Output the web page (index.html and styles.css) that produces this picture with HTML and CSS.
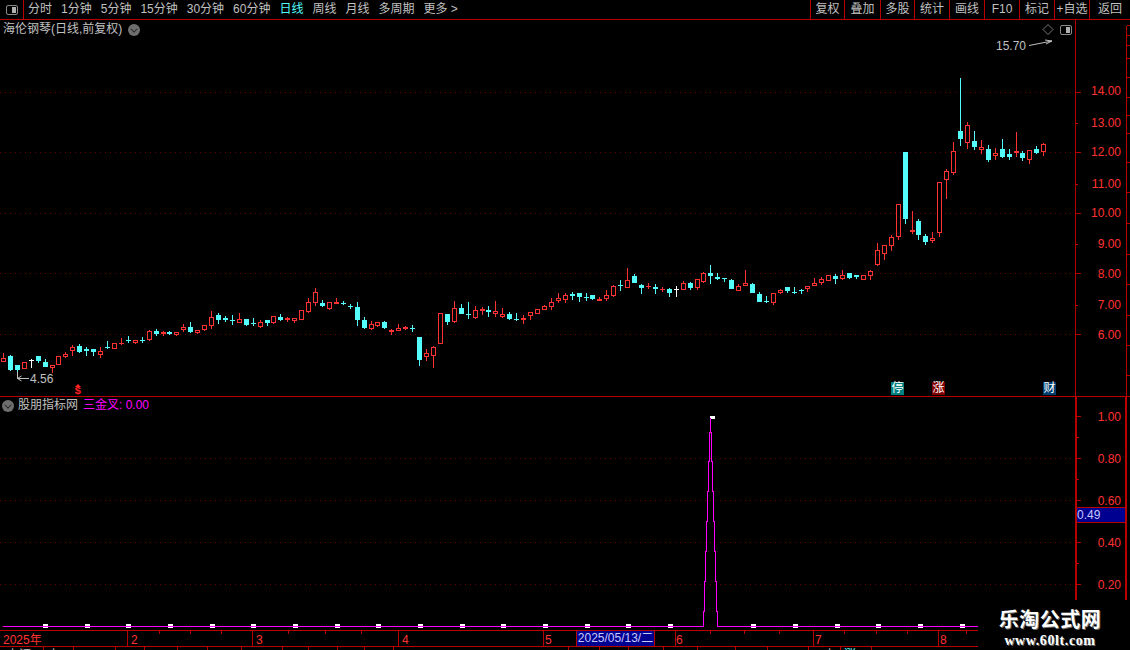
FILE: index.html
```html
<!DOCTYPE html>
<html lang="zh-CN">
<head>
<meta charset="utf-8">
<title>海伦钢琴 日线</title>
<link rel="stylesheet" href="styles.css">
</head>
<body>
<div class="app">
  <header class="toolbar">
    <button class="panel-btn" aria-label="切换面板">
      <svg class="toggle-icon" viewBox="0 0 12 10" width="12" height="10"><rect x=".5" y=".5" width="11" height="9" rx="1.5" class="toggle-frame"/><rect x="6" y="2" width="4" height="6" class="toggle-fill"/></svg>
    </button>
    <nav class="periods">
      <span>分时</span><span>1分钟</span><span>5分钟</span><span>15分钟</span><span>30分钟</span><span>60分钟</span>
      <span class="is-active">日线</span><span>周线</span><span>月线</span><span>多周期</span><span class="more">更多 &gt;</span>
    </nav>
    <div class="actions">
      <span>复权</span><span>叠加</span><span>多股</span><span>统计</span><span>画线</span><span>F10</span><span>标记</span><span>+自选</span><span>返回</span>
    </div>
  </header>

  <section class="pane pane-upper">
    <div class="plot">
      <svg id="price" class="canvas" viewBox="0 20 1075 376" width="1075" height="376">
        <g class="grid">
          <line x1="0" x2="1075" y1="92.5" y2="92.5"/><line x1="0" x2="1075" y1="152.5" y2="152.5"/><line x1="0" x2="1075" y1="213.5" y2="213.5"/><line x1="0" x2="1075" y1="273.5" y2="273.5"/><line x1="0" x2="1075" y1="334.5" y2="334.5"/>
        </g>
        <g id="candles"></g>
        <path class="note-line" d="M17.5 372V378.5H29M17.5 378.5l4-2.5M17.5 378.5l4 2.5"/>
        <text class="note" x="30" y="383">4.56</text>
        <text class="note" x="996" y="50">15.70</text>
        <path class="note-line" d="M1029 45.5L1052 41M1052 41l-7-1M1052 41l-6 3"/>
        <path class="diamond" d="M1048 24.5l5 5-5 5-5-5z"/>
        <text class="dollar" x="74.500" y="393.500">$</text>
        <path class="dollar-cap" d="M78 384l-3 3h6z"/>
      </svg>
      <div class="title"><span>海伦钢琴(日线,前复权)</span><i class="chevron"></i></div>
      <svg class="toggle-icon toggle-float" viewBox="0 0 12 10" width="12" height="10"><rect x=".5" y=".5" width="11" height="9" rx="1.5" class="toggle-frame"/><rect x="6" y="2" width="4" height="6" class="toggle-fill"/></svg>
      <span class="tag tag-teal tag-a">停</span>
      <span class="tag tag-red tag-b">涨</span>
      <span class="tag tag-blue tag-c">财</span>
    </div>
    <div class="axis">
      <svg class="canvas" viewBox="1076 20 54 376" width="54" height="376">
        <line class="axis-edge" x1="1126.5" x2="1126.5" y1="26" y2="396"/>
        <g class="ticks">
          <path d="M1076 92.5h5M1076 152.5h5M1076 213.5h5M1076 273.5h5M1076 334.5h5M1076 123.5h2M1076 184.5h2M1076 244.5h2M1076 305.5h2"/>
          <path d="M1127 25.5h3M1127 35.5h3M1127 45.5h3M1127 58.5h3M1127 77.5h3M1127 97.5h3M1127 115.5h3M1127 133.5h3M1127 162.5h3M1127 192.5h3M1127 223.5h3M1127 254.5h3M1127 284.5h3M1127 315.5h3M1127 345.5h3M1127 375.5h3"/>
        </g>
        <g class="axis-text">
          <text x="1121" y="95">14.00</text><text x="1121" y="127">13.00</text><text x="1121" y="156">12.00</text><text x="1121" y="188">11.00</text><text x="1121" y="217">10.00</text><text x="1121" y="248">9.00</text><text x="1121" y="278">8.00</text><text x="1121" y="309">7.00</text><text x="1121" y="339">6.00</text>
        </g>
      </svg>
    </div>
  </section>

  <section class="pane pane-lower">
    <div class="plot">
      <svg id="signal" class="canvas" viewBox="0 397 1075 233" width="1075" height="233">
        <g class="grid">
          <line x1="0" x2="1075" y1="458.5" y2="458.5"/><line x1="0" x2="1075" y1="500.5" y2="500.5"/><line x1="0" x2="1075" y1="542.5" y2="542.5"/><line x1="0" x2="1075" y1="584.5" y2="584.5"/>
        </g>
        <g id="dashes"></g>
        <path class="signal-line" d="M3 626.5H703.5V611.5H704.5V581.5H705.5V551.5H706.5V521.5H707.5V491.5H708.5V461.5H709.5V432.5H710.5V417.5V432.5H711.5V461.5H712.5V491.5H713.5V521.5H714.5V551.5H715.5V581.5H716.5V611.5H717.5V626.5H978"/>
      </svg>
      <div class="legend">
        <i class="chevron"></i><span class="legend-name">股朋指标网</span><span class="legend-value">三金叉: 0.00</span>
      </div>
    </div>
    <div class="axis axis-lower">
      <svg class="canvas" viewBox="1077 397 53 233" width="53" height="233">
        <g class="ticks">
          <path d="M1077 416.5h4M1077 458.5h4M1077 500.5h4M1077 542.5h4M1077 584.5h4M1077 437.5h2M1077 479.5h2M1077 521.5h2M1077 563.5h2"/>
        </g>
        <line class="axis-thick" x1="1126" x2="1126" y1="397" y2="630"/>
        <g class="axis-text">
          <text x="1121" y="421">1.00</text><text x="1121" y="463">0.80</text><text x="1121" y="505">0.60</text><text x="1121" y="547">0.40</text><text x="1121" y="589">0.20</text>
        </g>
      </svg>
      <span class="cursor-value">0.49</span>
    </div>
  </section>

  <footer class="timeline">
    <svg class="canvas" viewBox="0 0 978 16" width="978" height="16">
      <g class="ticks">
        <path d="M127.5 0v16M252.5 0v16M398.5 0v16M543.5 0v16M675.5 0v16M813.5 0v16M938.5 0v16"/>
        <path d="M159.5 0v3M190.5 0v3M221.5 0v3M288.5 0v3M325.5 0v3M361.5 0v3M710.5 0v3M744.5 0v3M779.5 0v3M844.5 0v3M876.5 0v3M907.5 0v3M966.5 0v3"/>
      </g>
      <g class="time-text">
        <text x="3" y="13">2025年</text><text x="131" y="13">2</text><text x="256" y="13">3</text><text x="402" y="13">4</text><text x="545" y="13">5</text><text x="676" y="13">6</text><text x="815" y="13">7</text><text x="940" y="13">8</text>
      </g>
    </svg>
    <span class="cursor-date">2025/05/13/二</span>
  </footer>
  <div class="status">
    <svg class="canvas" viewBox="0 0 978 3" width="978" height="3">
      <path class="ticks-only" d="M43.5 0v3M73.5 0v3M115.5 0v3M144.5 0v3M177.5 0v3M207.5 0v3M241.5 0v3M282.5 0v3M308.5 0v3M337.5 0v3M364.5 0v3M393.5 0v3M568.5 0v3M599.5 0v3M628.5 0v3M663.5 0v3M697.5 0v3M735.5 0v3M767.5 0v3M808.5 0v3M840.5 0v3M871.5 0v3"/>
      <text class="status-text" x="7" y="12">上证</text><text class="status-text" x="48" y="12">上</text><text class="status-text" x="824" y="12">上</text><text class="status-text cyan" x="844" y="12">涨</text>
    </svg>
  </div>

  <aside class="watermark">
    <strong>乐淘公式网</strong>
    <em>www.60lt.com</em>
  </aside>
</div>
<script src="chart.js"></script>
</body>
</html>
```
FILE: styles.css
```css
* { box-sizing: border-box; }
html, body { margin: 0; padding: 0; background: #000; }
body {
  font-family: "Liberation Sans", "Noto Sans CJK SC", sans-serif;
  font-size: 12px;
  color: #c0c0c0;
}
.app {
  position: relative;
  width: 1130px;
  height: 650px;
  overflow: hidden;
  display: flex;
  flex-direction: column;
  background: #000;
}
.canvas { display: block; }

/* toolbar */
.toolbar {
  flex: none;
  height: 20px;
  display: flex;
  align-items: stretch;
  border-bottom: 1px solid #b80000;
  line-height: 19px;
}
.panel-btn {
  width: 24px;
  padding: 0;
  background: none;
  border: 0;
  border-right: 1px solid #b80000;
  display: flex;
  align-items: center;
  justify-content: center;
}
.toggle-frame { fill: #000; stroke: #8a8a8a; }
.toggle-fill { fill: #b0b0b0; }
.periods {
  display: flex;
  gap: 9px;
  padding-left: 4px;
  white-space: nowrap;
}
.periods .is-active { color: #54fcfc; }
.actions {
  margin-left: auto;
  width: 320px;
  display: grid;
  grid-template-columns: 34px 36px 34px repeat(5, 35px) 41px;
}
.actions span {
  border-left: 1px solid #b80000;
  text-align: center;
  white-space: nowrap;
}

/* panes */
.pane { flex: none; display: flex; }
.pane-upper { height: 377px; border-bottom: 1px solid #b80000; }
.pane-lower { height: 233px; }
.plot { position: relative; width: 1075px; flex: none; }
.axis {
  position: relative;
  flex: 1;
  border-left: 1px solid #b80000;
}
.axis-lower { border-left-width: 2px; }
.grid line { stroke: #640000; stroke-width: 1; stroke-dasharray: 1 4; }
.ticks path, .ticks-only { stroke: #b80000; stroke-width: 1; fill: none; shape-rendering: crispEdges; }
.axis-edge { stroke: #b80000; stroke-width: 1; }
.axis-thick { stroke: #b80000; stroke-width: 2; }
.axis-text text { fill: #ff3232; font-size: 12px; text-anchor: end; }

/* overlays on the chart */
.title {
  position: absolute;
  left: 3px;
  top: 2px;
  display: flex;
  align-items: center;
  gap: 6px;
  line-height: 15px;
  white-space: nowrap;
}
.chevron {
  position: relative;
  display: block;
  flex: none;
  width: 12px;
  height: 12px;
  border-radius: 50%;
  background: #6e6e6e;
}
.chevron::after {
  content: "";
  position: absolute;
  left: 3px;
  top: 2px;
  width: 6px;
  height: 6px;
  box-sizing: border-box;
  border-right: 1.5px solid #1c1c1c;
  border-bottom: 1.5px solid #1c1c1c;
  transform: rotate(45deg) scale(.85);
}
.toggle-float { position: absolute; left: 1060px; top: 5px; }
.tag {
  position: absolute;
  top: 362px;
  width: 13px;
  height: 13px;
  font-size: 12px;
  line-height: 13px;
  text-align: center;
  color: #fff;
}
.tag-teal { background: #008080; }
.tag-red { background: #800000; }
.tag-blue { background: #003f70; }
.tag-a { left: 891px; }
.tag-b { left: 932px; }
.tag-c { left: 1043px; }
.note { fill: #c0c0c0; font-size: 12px; }
.note-line { fill: none; stroke: #c0c0c0; stroke-width: 1; }
.diamond { fill: none; stroke: #7a7a7a; stroke-width: 1; }
.dollar { fill: #ff2020; font-size: 11px; font-weight: 700; font-family: "Liberation Mono", monospace; }
.dollar-cap { fill: #ff2020; }

/* signal pane */
.signal-line { fill: none; stroke: #ff00ff; stroke-width: 1; shape-rendering: crispEdges; }
.dash { fill: #fff; }
.legend {
  position: absolute;
  left: 2px;
  top: 1px;
  display: flex;
  align-items: center;
  line-height: 15px;
  white-space: nowrap;
}
.legend-name { margin-left: 4px; }
.legend-value { margin-left: 5px; color: #ff00ff; }
.cursor-value {
  position: absolute;
  left: 0;
  top: 110px;
  width: 48px;
  height: 16px;
  line-height: 14px;
  color: #c8c8ff;
  background: #000090;
  border-top: 1px solid #b80000;
  border-bottom: 1px solid #b80000;
}

/* time axis */
.timeline {
  position: relative;
  flex: none;
  width: 978px;
  height: 17px;
  border-top: 1px solid #b80000;
  border-bottom: 1px solid #b80000;
}
.time-text text { fill: #ff3232; font-size: 12px; }
.cursor-date {
  position: absolute;
  left: 576px;
  top: -1px;
  width: 79px;
  height: 17px;
  line-height: 15px;
  text-align: center;
  white-space: nowrap;
  color: #c8c8ff;
  background: #000090;
  border: 1px solid #b80000;
}
.status { flex: none; height: 3px; overflow: hidden; }
.status-text { fill: #c0c0c0; font-size: 12px; }
.status-text.cyan { fill: #54fcfc; }

/* watermark */
.watermark {
  position: absolute;
  left: 978px;
  top: 600px;
  width: 152px;
  height: 50px;
  background: #000;
  display: flex;
  flex-direction: column;
  align-items: center;
  padding: 7px 8px 0 0;
  color: #fff;
}
.watermark strong {
  font-size: 20px;
  line-height: 26px;
  font-weight: 700;
  letter-spacing: .5px;
  text-shadow: 1px 1px 0 #6a6a6a;
}
.watermark em {
  font-family: "Liberation Serif", serif;
  font-size: 14px;
  line-height: 15px;
  font-style: normal;
  font-weight: 700;
  letter-spacing: .6px;
  text-shadow: 1px 1px 0 #6a6a6a;
}
```
FILE: chart.js
```js
// Candle readings: [x, type, high, bodyTop, bodyBottom, low] in pixels × 3 within each strip.
var strips = [
  { x0: 0, y0: 280, rows: [
    [10,"r",219,235,245,245],[31,"c",225,229,270,273],[52,"c",255,256,270,295],[73,"r",247,247,266,266],
    [94,"w",237,241,243,263],[115,"c",228,229,243,249],[136,"c",238,246,261,262],[157,"r",256,256,263,278],
    [175,"r",229,229,254,254],[196,"r",215,223,231,235],[217,"r",195,202,212,228],[238,"c",192,198,216,219],
    [259,"c",202,208,212,227],[280,"c",208,208,216,227],[301,"r",202,212,224,233],[322,"c",183,202,204,207],
    [343,"r",190,190,208,208],[364,"f",175,190,193,194],[385,"c",169,180,182,189],[406,"r",181,181,188,191],
    [427,"c",171,179,181,188],[448,"r",150,154,181,182],[469,"c",147,153,162,167],[490,"r",152,157,163,167],
    [508,"c",154,157,163,164],[529,"r",157,157,166,167],[550,"r",133,142,149,156],[571,"c",126,141,156,159],
    [592,"r",151,151,158,162],[613,"r",136,136,151,154],[634,"r",94,112,138,146],[655,"c",99,106,120,132],
    [676,"c",108,114,119,126],[697,"c",105,119,121,134],[718,"r",99,118,128,130],[739,"c",118,118,134,139],
    [760,"c",114,129,133,137],[781,"r",120,127,140,144],[802,"c",121,121,130,137],[820,"r",108,109,128,131],
    [841,"c",102,111,119,124],[862,"r",111,115,121,125],[883,"r",115,115,124,128]
  ]},
  { x0: 300, y0: 260, rows: [
    [4,"r",150,150,179,179],[25,"r",114,126,156,159],[46,"r",84,96,128,138],[67,"c",120,129,138,141],
    [88,"r",126,126,147,150],[109,"f",114,126,131,132],[130,"c",123,128,130,135],[151,"c",132,138,140,147],
    [172,"c",126,141,180,198],[193,"c",171,180,204,207],[214,"r",183,192,206,210],[232,"r",186,186,197,201],
    [253,"c",183,186,204,207],[274,"f",207,210,215,225],[295,"r",192,205,212,213],[316,"r",198,201,208,210],
    [337,"c",195,205,207,216],[358,"c",231,231,300,318],[379,"r",267,279,291,303],[400,"r",258,261,288,324],
    [421,"r",159,159,252,252],[442,"c",162,162,186,195],[463,"r",123,144,186,189],[484,"c",132,144,162,162],
    [505,"c",126,161,163,177],[526,"r",138,150,174,177],[547,"f",141,147,152,165],[565,"c",138,150,155,171],
    [586,"r",123,153,162,171],[607,"r",144,162,171,174],[628,"c",156,162,177,180],[649,"c",159,177,179,183],
    [670,"f",165,174,179,192],[691,"r",156,156,167,180],[712,"r",147,147,162,162],[733,"r",136,138,150,150],
    [754,"r",114,126,141,150],[775,"r",99,114,122,129],[796,"r",99,105,120,129],[817,"c",96,101,108,120],
    [838,"c",99,99,111,126],[859,"c",99,110,112,123],[877,"c",105,105,117,120],[898,"f",111,116,122,122]
  ]},
  { x0: 600, y0: 230, rows: [
    [19,"r",180,196,206,213],[40,"r",165,168,198,201],[61,"c",150,165,167,183],[82,"r",114,150,174,174],
    [103,"c",132,138,159,159],[124,"c",162,165,174,192],[145,"f",159,167,170,177],[166,"c",162,171,177,192],
    [187,"f",171,176,180,186],[208,"c",174,177,189,201],[229,"w",168,177,179,201],[250,"r",153,159,180,180],
    [271,"c",156,159,174,180],[292,"r",147,147,174,180],[310,"r",126,129,156,159],[331,"c",105,129,138,162],
    [352,"c",129,141,147,150],[373,"c",144,144,146,156],[394,"c",147,150,177,177],[415,"r",162,168,183,183],
    [436,"r",120,159,167,168],[457,"c",159,162,189,189],[478,"c",186,192,216,216],[499,"c",198,214,216,219],
    [520,"r",189,189,220,225],[541,"r",177,180,188,192],[562,"c",171,171,183,189],[583,"c",171,186,188,192],
    [604,"c",177,179,181,192],[622,"r",168,168,176,186],[643,"r",144,159,167,168],[664,"r",141,147,159,165],
    [685,"r",135,135,153,153],[706,"c",132,138,147,162],[727,"r",120,135,147,150],[748,"c",129,129,144,147],
    [769,"c",135,135,140,147],[790,"r",135,135,150,150],[811,"r",120,123,138,150],[832,"r",39,60,105,108],
    [853,"r",45,45,72,90],[874,"r",15,21,48,63]
  ]},
  { x0: 860, y0: 70, rows: [
    [115,"r",402,402,502,510],[136,"c",246,246,447,462],[157,"f",423,480,486,492],[175,"c",447,453,495,510],
    [196,"c",492,498,516,525],[217,"r",486,505,514,519],[238,"r",336,336,490,500],[259,"r",297,303,329,387],
    [280,"r",216,243,308,315],[301,"c",24,183,207,228],[322,"r",156,165,218,237],[343,"c",183,213,231,240],
    [364,"r",210,232,239,252],[385,"c",225,237,270,276],[406,"r",234,249,258,270],[427,"c",207,237,261,264],
    [448,"c",237,252,261,270],[469,"f",186,243,248,261],[487,"c",243,249,264,273],[508,"r",240,240,270,282],
    [529,"c",228,237,249,252],[550,"r",219,222,246,258]
  ]}
];

var NS = "http://www.w3.org/2000/svg";
var COLORS = { r: "#ff3232", f: "#ff3232", c: "#54fcfc", w: "#ffffff" };

function rect(parent, x, y, w, h, attrs) {
  var el = document.createElementNS(NS, "rect");
  el.setAttribute("x", x);
  el.setAttribute("y", y);
  el.setAttribute("width", w);
  el.setAttribute("height", h);
  el.setAttribute("shape-rendering", "crispEdges");
  for (var key in attrs) el.setAttribute(key, attrs[key]);
  parent.appendChild(el);
}

var candles = document.getElementById("candles");
strips.forEach(function (strip) {
  strip.rows.forEach(function (row) {
    var cx = Math.floor(strip.x0 + row[0] / 3);
    var type = row[1];
    var hi = Math.round(strip.y0 + row[2] / 3);
    var top = Math.round(strip.y0 + row[3] / 3);
    var bot = Math.round(strip.y0 + row[4] / 3);
    var lo = Math.round(strip.y0 + row[5] / 3);
    var color = COLORS[type];
    rect(candles, cx, hi, 1, Math.max(lo - hi, 1), { fill: color });
    if (type === "r") {
      rect(candles, cx - 2 + 0.5, top + 0.5, 4, Math.max(bot - top - 1, 1), { fill: "#000", stroke: color });
    } else {
      rect(candles, cx - 2, top, 5, Math.max(bot - top, 1), { fill: color });
    }
  });
});

var dashes = document.getElementById("dashes");
for (var i = 0; i < 23; i++) {
  var x = Math.round(43 + i * 41.67);
  var y = i === 16 ? 416 : 624;
  rect(dashes, x, y, 5, i === 16 ? 3 : 4, { "class": "dash" });
}
```
